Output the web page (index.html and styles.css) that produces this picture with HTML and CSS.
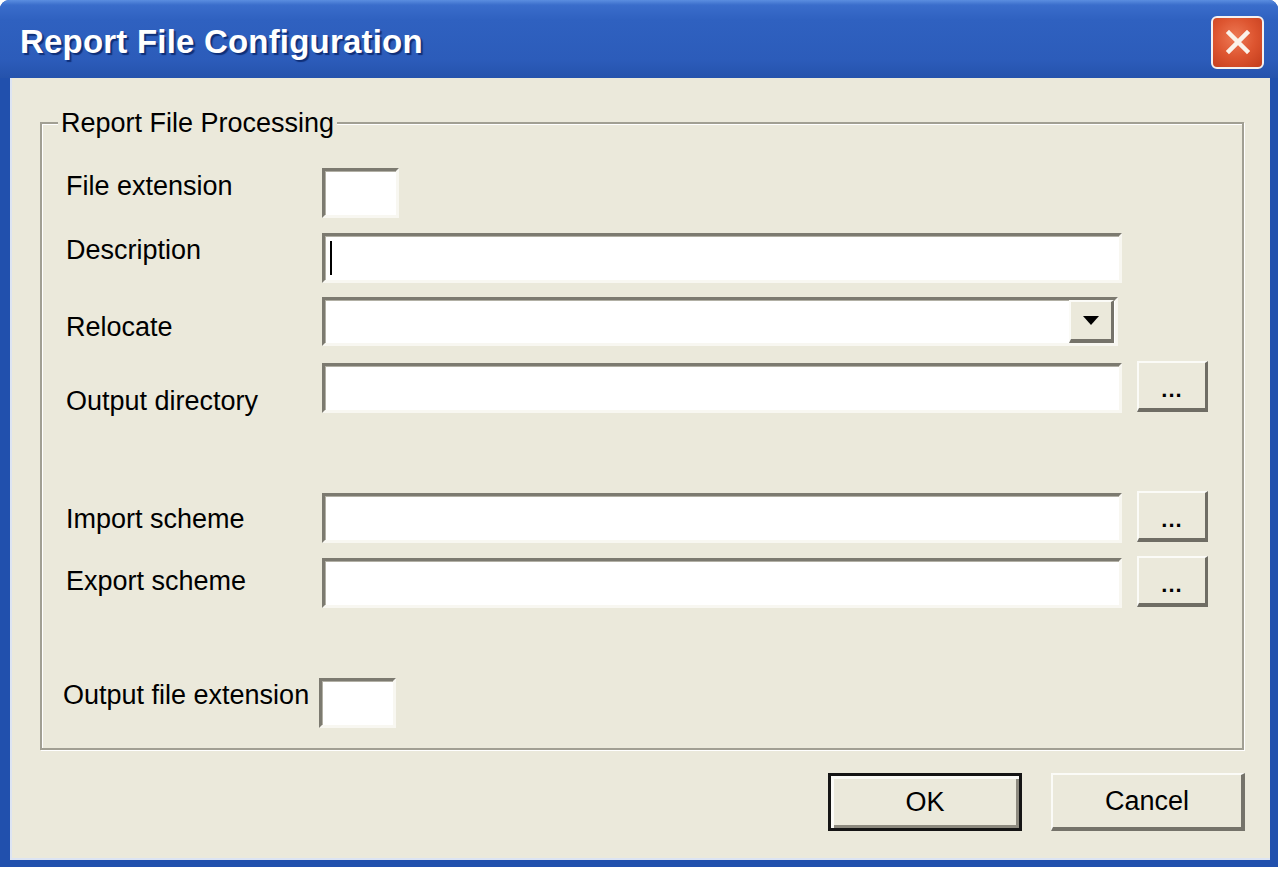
FILE: index.html
```html
<!DOCTYPE html>
<html lang="en">
<head>
<meta charset="utf-8">
<title>Report File Configuration</title>
<link rel="stylesheet" href="styles.css">
</head>
<body>
<div class="window">
  <div class="titlebar">
    <span class="title">Report File Configuration</span>
    <button class="close" aria-label="Close">
      <svg width="30" height="30" viewBox="0 0 30 30"><path d="M6 6 L24 24 M24 6 L6 24" stroke="#fbf3ea" stroke-width="4.5" stroke-linecap="square" fill="none"/></svg>
    </button>
  </div>
  <div class="frame">
    <div class="client">
      <fieldset class="group">
        <legend>Report File Processing</legend>
        <div class="row">
          <label class="lbl off-3">File extension</label>
          <div class="field small"></div>
        </div>
        <div class="row">
          <label class="lbl off-2">Description</label>
          <div class="field wide"><span class="caret"></span></div>
        </div>
        <div class="row gap-14">
          <label class="lbl off-15">Relocate</label>
          <div class="field combo"><span class="dropbtn"><span class="tri"></span></span></div>
        </div>
        <div class="row gap-16">
          <label class="lbl off-23">Output directory</label>
          <div class="field wide"></div>
          <button class="pbtn">...</button>
        </div>
        <div class="row gap-80">
          <label class="lbl off-11">Import scheme</label>
          <div class="field wide"></div>
          <button class="pbtn">...</button>
        </div>
        <div class="row">
          <label class="lbl off-8">Export scheme</label>
          <div class="field wide"></div>
          <button class="pbtn">...</button>
        </div>
        <div class="row gap-70 tight">
          <label class="lbl off-2">Output file extension</label>
          <div class="field small"></div>
        </div>
      </fieldset>
      <div class="actions">
        <button class="btn default">OK</button>
        <button class="btn">Cancel</button>
      </div>
    </div>
  </div>
</div>
</body>
</html>
```
FILE: styles.css
```css
* { box-sizing: border-box; }
html, body { margin: 0; padding: 0; background: #ffffff; }
body { font-family: "Liberation Sans", Arial, sans-serif; color: #000; }

.window {
  width: 1278px;
  height: 867px;
  display: flex;
  flex-direction: column;
  border-radius: 9px 9px 0 0;
  overflow: hidden;
  background: #2150ad;
}

.titlebar {
  height: 78px;
  flex: none;
  display: flex;
  align-items: center;
  justify-content: space-between;
  padding: 0 14px 2px 20px;
  background: linear-gradient(#5b8ee0 0, #3a6dcb 5px, #2f61c0 20px, #2c5cba 60px, #2553ac 78px);
}

.title {
  color: #ffffff;
  font-family: "Liberation Sans", Arial, sans-serif;
  font-weight: bold;
  font-size: 33px;
  letter-spacing: 0.2px;
  padding-top: 8px;
  text-shadow: 2px 2px 1px #0f2f78;
}

.close {
  width: 53px;
  height: 53px;
  margin-top: 8px;
  padding: 0;
  border: 2px solid #f4f1f0;
  border-radius: 6px;
  background: radial-gradient(circle at 45% 40%, #ee7a55 0, #dd5530 50%, #c23c1c 100%);
  display: flex;
  align-items: center;
  justify-content: center;
}

.frame {
  flex: 1;
  display: flex;
  padding: 0 8px 7px 10px;
  background: #2150ad;
}

.client {
  flex: 1;
  background: #ebe9db;
  border-left: 2px solid #dce4f3;
  border-bottom: 2px solid #dce4f3;
  display: flex;
  flex-direction: column;
}

.group {
  margin: 30px 26px 0 28px;
  padding: 30px 0 20px 24px;
  border: 2px solid #a19f93;
  box-shadow: 1px 1px 0 #ffffff, inset 1px 1px 0 #ffffff;
  min-width: 0;
}

.group legend {
  margin-left: -8px;
  padding: 0 3px;
  font-size: 27px;
  line-height: 30px;
  background: #ebe9db;
}

.row {
  display: flex;
  align-items: flex-start;
  height: 50px;
  margin-top: 15px;
}
.row:first-of-type { margin-top: 0; }
.row.gap-14 { margin-top: 14px; }
.row.gap-16 { margin-top: 16px; }
.row.gap-80 { margin-top: 80px; }
.row.gap-70 { margin-top: 70px; }
.row.tight { margin-left: -3px; }

.lbl {
  width: 256px;
  flex: none;
  font-size: 27px;
  line-height: 30px;
  white-space: nowrap;
}
.off-2 { padding-top: 2px; }
.off-3 { padding-top: 3px; }
.off-8 { padding-top: 8px; }
.off-11 { padding-top: 11px; }
.off-15 { padding-top: 15px; }
.off-23 { padding-top: 23px; }

.field {
  height: 50px;
  flex: none;
  background: #ffffff;
  border-style: solid;
  border-width: 3px;
  border-color: #7c7a70 #f8f7f1 #f8f7f1 #7c7a70;
  box-shadow: inset 1px 1px 0 #b2b0a5;
  display: flex;
  align-items: center;
}
.field.small { width: 77px; }
.field.wide { width: 800px; }
.field.combo { width: 796px; height: 49px; justify-content: flex-end; padding: 0 1px 0 0; }

.caret {
  width: 2px;
  height: 34px;
  margin-left: 5px;
  background: #000;
}

.dropbtn {
  width: 45px;
  height: 100%;
  background: #ebe9db;
  border-style: solid;
  border-width: 2px 3px 4px 2px;
  border-color: #fbfbf7 #75736a #75736a #fbfbf7;
  display: flex;
  align-items: center;
  justify-content: center;
}
.tri {
  width: 0;
  height: 0;
  border-left: 8px solid transparent;
  border-right: 8px solid transparent;
  border-top: 9px solid #000;
}

.pbtn {
  width: 71px;
  height: 51px;
  margin-left: 15px;
  margin-top: -2px;
  flex: none;
  padding: 8px 0 0 0;
  background: #ebe9db;
  border-style: solid;
  border-width: 2px 3px 4px 2px;
  border-color: #fbfbf7 #6f6d64 #6f6d64 #fbfbf7;
  font-family: "Liberation Sans", Arial, sans-serif;
  font-size: 22px;
  font-weight: bold;
  line-height: 30px;
  color: #000;
  letter-spacing: 1px;
}

.actions {
  display: flex;
  justify-content: flex-end;
  gap: 29px;
  margin: 23px 25px 0 0;
}

.btn {
  width: 194px;
  height: 58px;
  padding: 0;
  background: #ebe9db;
  border-style: solid;
  border-width: 2px 4px 4px 2px;
  border-color: #fbfbf7 #75736a #75736a #fbfbf7;
  font-family: "Liberation Sans", Arial, sans-serif;
  font-size: 27px;
  color: #000;
}
.btn.default {
  border: 3px solid #151515;
  box-shadow: inset 3px 3px 0 #fbfbf7, inset -3px -3px 0 #8d8a7f;
}
```
